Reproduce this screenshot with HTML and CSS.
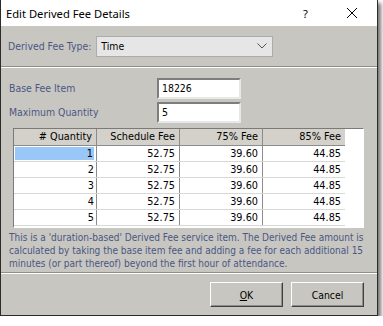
FILE: index.html
```html
<!DOCTYPE html>
<html lang="en">
<head>
    <meta charset="UTF-8">
    <title>Edit Derived Fee Details</title>
    <link rel="stylesheet" href="styles.css">
</head>
<body>
    <div class="window">
        <div class="titlebar">
            <span class="title">Edit Derived Fee Details</span>
            <span class="help">?</span>
            <span class="close">
                <svg width="12" height="12" viewBox="0 0 12 12"><path d="M1 1L11 11M11 1L1 11" stroke="#000" stroke-width="1"/></svg>
            </span>
        </div>
        <div class="content">
            <div class="type-row">
                <span class="label">Derived Fee Type:</span>
                <div class="select">
                    <span>Time</span>
                    <svg width="10" height="6" viewBox="0 0 10 6"><path d="M0.5 0.5L5 5L9.5 0.5" fill="none" stroke="#555" stroke-width="1"/></svg>
                </div>
            </div>
            <div class="sep"></div>
            <div class="fields">
                <div class="field">
                    <span class="label">Base Fee Item</span>
                    <div class="input">18226</div>
                </div>
                <div class="field">
                    <span class="label">Maximum Quantity</span>
                    <div class="input">5</div>
                </div>
            </div>
            <div class="grid">
                <table>
                    <tr>
                        <th># Quantity</th>
                        <th>Schedule Fee</th>
                        <th>75% Fee</th>
                        <th>85% Fee</th>
                    </tr>
                    <tr><td><span class="selected">1</span></td><td>52.75</td><td>39.60</td><td>44.85</td></tr>
                    <tr><td>2</td><td>52.75</td><td>39.60</td><td>44.85</td></tr>
                    <tr><td>3</td><td>52.75</td><td>39.60</td><td>44.85</td></tr>
                    <tr><td>4</td><td>52.75</td><td>39.60</td><td>44.85</td></tr>
                    <tr><td>5</td><td>52.75</td><td>39.60</td><td>44.85</td></tr>
                </table>
            </div>
            <p class="note">This is a 'duration-based' Derived Fee service item. The Derived Fee amount is calculated by taking the base item fee and adding a fee for each additional 15 minutes (or part thereof) beyond the first hour of attendance.</p>
            <div class="sep"></div>
            <div class="buttons">
                <button class="btn"><u>O</u>K</button>
                <button class="btn">Cancel</button>
            </div>
        </div>
    </div>
</body>
</html>
```

FILE: styles.css
```css
body {
    margin: 0;
    background: #fff;
    font-family: "DejaVu Sans Condensed", "DejaVu Sans", sans-serif;
    font-size: 10.4px;
}
.window {
    width: 376px;
    border: 1px solid #2b2b2b;
    border-top: none;
    box-shadow: 3px 3px 4px rgba(0, 0, 0, 0.55);
}
.titlebar {
    height: 26px;
    background: #fff;
    display: flex;
    align-items: center;
    font-family: "Noto Sans", sans-serif;
    font-size: 11.2px;
    color: #000;
}
.title {
    padding-left: 5px;
    flex: 1;
}
.help {
    width: 14px;
    margin-right: 29px;
}
.close {
    display: flex;
    margin-right: 19px;
}
.content {
    background: #c8c6c1;
    padding-bottom: 8px;
}
.label {
    color: #4a5784;
}
.type-row {
    display: flex;
    align-items: center;
    height: 40px;
    padding-left: 7px;
}
.select {
    margin-left: 5px;
    width: 177px;
    height: 21px;
    border: 1px solid #acacac;
    background: #e6e6e6;
    display: flex;
    align-items: center;
    justify-content: space-between;
    padding: 0 5px 0 4px;
    box-sizing: border-box;
    color: #000;
}
.sep {
    border-top: 1px solid #8f8e8a;
    border-bottom: 1px solid #fff;
}
.fields {
    padding: 8px 0 0 8px;
}
.field {
    display: flex;
    align-items: center;
    height: 24px;
}
.field .label {
    width: 148px;
}
.input {
    width: 84px;
    height: 21px;
    box-sizing: border-box;
    background: #fff;
    border: 2px solid #7d7d7d;
    border-right-color: #e8e8e8;
    border-bottom-color: #e8e8e8;
    padding-left: 3px;
    line-height: 17px;
    color: #000;
}
.grid {
    margin: 4px 0 0 12px;
    width: 351px;
    height: 100px;
    box-sizing: border-box;
    background: #fff;
    border: 1px solid #7a7a7a;
    border-right-color: #fff;
    border-bottom-color: #fff;
}
table {
    border-collapse: collapse;
    color: #000;
    line-height: 15px;
    font-size: 10.8px;
}
th, td {
    width: 78px;
    padding: 0 4px 0 0;
    text-align: right;
    font-weight: normal;
    border-right: 1px solid #8c8c8c;
}
th {
    background: #d4d1ca;
    line-height: 16px;
    border-bottom: 1px solid #8c8c8c;
}
td {
    border-bottom: 1px solid #d8d8d8;
}
th:last-child, td:last-child {
    border-right: none;
}
td:first-child {
    padding: 0 2px 0 1px;
}
.selected {
    display: block;
    background: #99c8f8;
    padding-right: 1px;
    line-height: 13px;
    margin: 1px 0;
}
.note {
    margin: 3px 6px 2px 8px;
    line-height: 13px;
    color: #4a5784;
    font-size: 10px;
}
.buttons {
    display: flex;
    justify-content: flex-end;
    gap: 8px;
    padding: 8px 13px 0 0;
}
.btn {
    width: 73px;
    height: 25px;
    padding: 0;
    background: #c8c6c1;
    border: 1px solid;
    border-color: #fff #404040 #404040 #fff;
    box-shadow: inset -1px -1px 0 #8f8e8a;
    font: inherit;
    color: #000;
}
```
